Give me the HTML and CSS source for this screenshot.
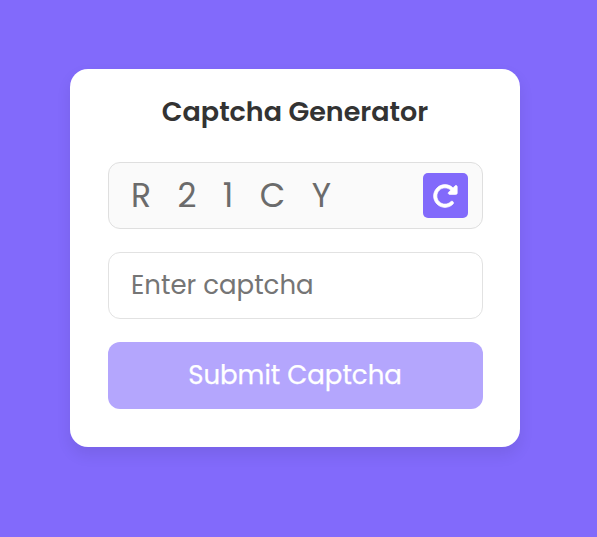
FILE: index.html
```html
<!DOCTYPE html>
<html lang="en">
<head>
<meta charset="utf-8">
<title>Captcha Generator</title>
<link rel="stylesheet" href="styles.css">
</head>
<body>
<main class="card">
  <h1 class="title">Captcha Generator</h1>
  <div class="field captcha">
    <div class="code"><span>R</span><span>2</span><span>1</span><span>C</span><span>Y</span></div>
    <button class="refresh" aria-label="Refresh">
      <svg viewBox="0 0 512 512"><path d="M463.5 224H472c13.3 0 24-10.700 24-24V72c0-9.700-5.800-18.500-14.800-22.200s-19.300-1.700-26.200 5.200L413.400 96.600c-87.600-86.500-228.700-86.200-315.800 1c-87.500 87.500-87.500 229.300 0 316.800s229.300 87.500 316.800 0c12.500-12.500 12.500-32.800 0-45.300s-32.800-12.500-45.300 0c-62.500 62.500-163.800 62.500-226.300 0s-62.500-163.800 0-226.300c62.200-62.200 162.700-62.500 225.300-1L327 183c-6.900 6.900-8.900 17.200-5.200 26.200s12.500 14.800 22.200 14.800H463.500z"/></svg>
    </button>
  </div>
  <input class="field entry" type="text" placeholder="Enter captcha">
  <button class="submit">Submit Captcha</button>
</main>
</body>
</html>
```
FILE: styles.css
```css
* { box-sizing: border-box; margin: 0; padding: 0; font-family: Poppins, "Open Sans", sans-serif; }
body { height: 537px; padding: 69px 0 0 70px; background: #826afb; overflow: hidden; }
.card { width: 450px; height: 378px; padding: 22px 37px 38px 38px; border-radius: 18px; background: #fff; box-shadow: 0 7.5px 15px rgba(0, 0, 0, .08); }
.title { width: 374px; height: 42px; text-align: center; color: #333; font-size: 27px; line-height: 42px; font-weight: 600; white-space: nowrap; }
.field { width: 375px; height: 67px; border: 1px solid #dfdfdf; border-radius: 12px; }
.captcha { display: flex; align-items: center; justify-content: space-between; margin-top: 29px; padding: 1px 14px 0 22px; background: #fafafa; }
.code { display: flex; gap: 26.4px; color: #6b6b6b; font-size: 33px; }
.refresh { display: grid; place-items: center; width: 45px; height: 45px; margin-bottom: .2px; border: 0; border-radius: 5px; background: #826afb; }
.refresh svg { width: 26px; height: 26px; margin: 0 1px 0 0; overflow: visible; fill: #fff; stroke: #fff; stroke-width: 14; stroke-linejoin: round; }
.entry { display: block; margin-top: 23px; padding: 0 22px; border-color: #e2e2e2; font-size: 26px; }
.entry::placeholder { color: #757575; }
.submit { display: block; width: 375px; height: 67px; margin-top: 23px; padding: 0 1px 1px 0; border: 0; border-radius: 12px; background: #b4a6fd; color: #fff; font-size: 26px; -webkit-text-stroke: .25px #fff; }
```
